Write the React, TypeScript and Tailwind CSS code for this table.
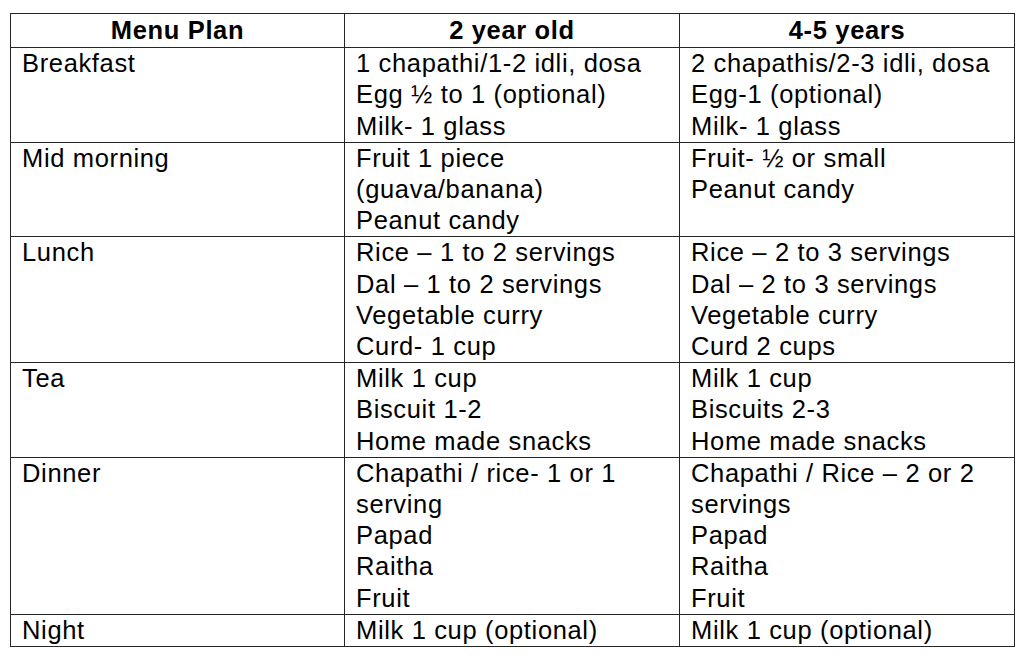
const rows: { meal: string; young: string[]; older: string[] }[] = [
  {
    meal: "Breakfast",
    young: ["1 chapathi/1-2 idli, dosa", "Egg ½ to 1 (optional)", "Milk- 1 glass"],
    older: ["2 chapathis/2-3 idli, dosa", "Egg-1 (optional)", "Milk- 1 glass"],
  },
  {
    meal: "Mid morning",
    young: ["Fruit 1 piece", "(guava/banana)", "Peanut candy"],
    older: ["Fruit- ½ or small", "Peanut candy"],
  },
  {
    meal: "Lunch",
    young: ["Rice – 1 to 2 servings", "Dal – 1 to 2 servings", "Vegetable curry", "Curd- 1 cup"],
    older: ["Rice – 2 to 3 servings", "Dal – 2 to 3 servings", "Vegetable curry", "Curd 2 cups"],
  },
  {
    meal: "Tea",
    young: ["Milk 1 cup", "Biscuit 1-2", "Home made snacks"],
    older: ["Milk 1 cup", "Biscuits 2-3", "Home made snacks"],
  },
  {
    meal: "Dinner",
    young: ["Chapathi / rice- 1 or 1", "serving", "Papad", "Raitha", "Fruit"],
    older: ["Chapathi / Rice – 2 or 2", "servings", "Papad", "Raitha", "Fruit"],
  },
  {
    meal: "Night",
    young: ["Milk 1 cup (optional)"],
    older: ["Milk 1 cup (optional)"],
  },
];

function Cell({ lines }: { lines: string[] }) {
  return (
    <td className="border border-[#262626] px-[11px] py-0 align-top">
      {lines.map((l, i) => (
        <div key={i}>{l}</div>
      ))}
    </td>
  );
}

export default function App() {
  return (
    <div className="min-h-[663px] w-[1024px] bg-white pt-[13px] pl-[10px]">
      <table
        className="w-[1004px] table-fixed border-collapse border border-[#262626] text-[25.5px] leading-[31.2px] tracking-[0.65px] text-black"
        style={{ fontFamily: '"Liberation Sans", Arial, sans-serif' }}
      >
        <colgroup>
          <col className="w-[334px]" />
          <col className="w-[335px]" />
          <col className="w-[335px]" />
        </colgroup>
        <thead>
          <tr>
            <th className="border border-[#262626] py-[1px] text-center font-bold">Menu Plan</th>
            <th className="border border-[#262626] py-[1px] text-center font-bold">2 year old</th>
            <th className="border border-[#262626] py-[1px] text-center font-bold">4-5 years</th>
          </tr>
        </thead>
        <tbody>
          {rows.map((r) => (
            <tr key={r.meal}>
              <Cell lines={[r.meal]} />
              <Cell lines={r.young} />
              <Cell lines={r.older} />
            </tr>
          ))}
        </tbody>
      </table>
    </div>
  );
}
